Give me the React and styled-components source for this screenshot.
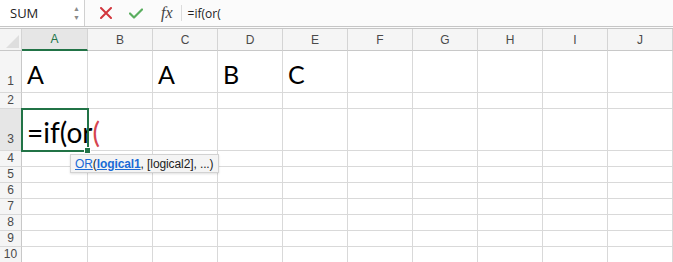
import React from 'react';
import styled, { createGlobalStyle } from 'styled-components';

const GlobalStyle = createGlobalStyle`
  html, body { margin: 0; padding: 0; background: #fff; }
  body { width: 673px; height: 262px; overflow: hidden; font-family: "Open Sans", "Liberation Sans", sans-serif; }
`;

const Page = styled.div`
  width: 673px;
  height: 262px;
  display: flex;
  flex-direction: column;
`;

const FormulaBar = styled.div`
  display: flex;
  align-items: center;
  height: 26px;
  background: #fbfbfb;
  border-bottom: 3px double #c6c6c6;
  box-sizing: content-box;
`;

const NameBox = styled.div`
  width: 85px;
  height: 26px;
  box-sizing: border-box;
  display: flex;
  align-items: center;
  justify-content: space-between;
  padding: 0 4px 0 10px;
  background: #fff;
  border-right: 1px solid #d0d0d0;
  font-size: 13px;
  color: #222;
`;

const Stepper = styled.div`
  display: flex;
  flex-direction: column;
  gap: 4px;
  color: #8a8a8a;
  font-size: 7px;
  line-height: 5px;
`;

const IconButton = styled.div`
  width: 30px;
  display: flex;
  justify-content: center;
  align-items: center;
`;

const Fx = styled.div`
  font-family: "Liberation Serif", serif;
  font-style: italic;
  font-size: 16px;
  color: #444;
  padding: 0 8px 0 8px;
  border-right: 1px solid #dcdcdc;
  line-height: 16px;
  margin-left: 2px;
`;

const FormulaText = styled.div`
  font-size: 12px;
  color: #222;
  padding-left: 6px;
`;

const Sheet = styled.div`
  position: relative;
  display: grid;
  grid-template-columns: 22px 66px repeat(9, 65px);
  grid-template-rows: 22px 42px 16px 42px repeat(7, 16px);
  flex: 1;
`;

const Corner = styled.div`
  background: #f4f4f4;
  border-right: 1px solid #d4d4d4;
  border-bottom: 1px solid #c8c8c8;
  position: relative;
  &::after {
    content: '';
    position: absolute;
    right: 2px;
    bottom: 2px;
    border-style: solid;
    border-width: 0 0 13px 13px;
    border-color: transparent transparent #dedede transparent;
  }
`;

const ColHeader = styled.div`
  box-sizing: border-box;
  display: flex;
  align-items: center;
  justify-content: center;
  font-size: 12px;
  font-family: "Liberation Sans", sans-serif;
  background: ${p => (p.$active ? '#e6e6e6' : '#f5f5f5')};
  color: ${p => (p.$active ? '#217346' : '#4a4a4a')};
  border-right: 1px solid #d4d4d4;
  border-bottom: ${p => (p.$active ? '2px solid #217346' : '1px solid #c8c8c8')};
`;

const RowHeader = styled.div`
  box-sizing: border-box;
  display: flex;
  align-items: flex-end;
  justify-content: center;
  padding-bottom: 1px;
  font-size: 12px;
  font-family: "Liberation Sans", sans-serif;
  background: ${p => (p.$active ? '#e6e6e6' : '#f5f5f5')};
  color: #4a4a4a;
  border-right: 1px solid #c8c8c8;
  border-bottom: 1px solid #d9d9d9;
  ${p => p.$tall && 'padding-bottom: 4px;'}
`;

const Cell = styled.div`
  box-sizing: border-box;
  display: flex;
  align-items: flex-end;
  padding: 0 0 5px 5px;
  border-right: 1px solid #d9d9d9;
  border-bottom: 1px solid #d9d9d9;
  font-family: "Lato", "Open Sans", sans-serif;
  font-size: 25px;
  line-height: 25px;
  color: #000;
  white-space: nowrap;
  position: relative;
  overflow: visible;
  ${p => p.$selected && `
    outline: 2px solid #217346;
    outline-offset: -1px;
    z-index: 2;
    font-size: 28px;
    line-height: 28px;
    padding-bottom: 4px;
    &::after {
      content: '';
      position: absolute;
      right: -4px;
      bottom: -4px;
      width: 5px;
      height: 5px;
      background: #217346;
      border: 1px solid #fff;
    }
  `}
`;

const Paren = styled.span`
  color: #d5444f;
`;

const Tooltip = styled.div`
  position: absolute;
  left: 70px;
  top: 125px;
  z-index: 3;
  height: 17px;
  padding: 0 4px;
  display: flex;
  align-items: center;
  background: #f4f4f4;
  border: 1px solid #d2d2d2;
  box-shadow: 0 1px 2px rgba(0, 0, 0, 0.12);
  font-family: "Liberation Sans", sans-serif;
  font-size: 12px;
  letter-spacing: -0.1px;
  color: #222;
  white-space: nowrap;
`;

const Link = styled.span`
  color: #1a6ad6;
  text-decoration: underline;
  font-weight: ${p => (p.$bold ? 700 : 400)};
`;

const cols = ['A', 'B', 'C', 'D', 'E', 'F', 'G', 'H', 'I', 'J'];
const data = { '1A': 'A', '1C': 'A', '1D': 'B', '1E': 'C' };

export default function App() {
  const rows = [1, 2, 3, 4, 5, 6, 7, 8, 9, 10];
  return (
    <Page>
      <GlobalStyle />
      <FormulaBar>
        <NameBox>
          SUM
          <Stepper>
            <span>▲</span>
            <span>▼</span>
          </Stepper>
        </NameBox>
        <IconButton style={{ marginLeft: 6 }}>
          <svg width="12" height="12" viewBox="0 0 12 12">
            <path d="M1 1 L11 11 M11 1 L1 11" stroke="#d2363d" strokeWidth="2" strokeLinecap="round" />
          </svg>
        </IconButton>
        <IconButton>
          <svg width="14" height="11" viewBox="0 0 14 11">
            <path d="M1 5.5 L5 9.5 L13 1.5" stroke="#5aae5f" strokeWidth="2.2" fill="none" strokeLinecap="round" strokeLinejoin="round" />
          </svg>
        </IconButton>
        <Fx>fx</Fx>
        <FormulaText>=if(or(</FormulaText>
      </FormulaBar>
      <Sheet>
        <Corner />
        {cols.map(c => (
          <ColHeader key={c} $active={c === 'A'}>{c}</ColHeader>
        ))}
        {rows.map(r => (
          <React.Fragment key={r}>
            <RowHeader $active={r === 3} $tall={r === 1 || r === 3}>{r}</RowHeader>
            {cols.map(c =>
              r === 3 && c === 'A' ? (
                <Cell key={c} $selected>
                  =if(or<Paren>(</Paren>
                </Cell>
              ) : (
                <Cell key={c}>{data[`${r}${c}`] || ''}</Cell>
              )
            )}
          </React.Fragment>
        ))}
        <Tooltip>
          <Link>OR</Link>(<Link $bold>logical1</Link>, [logical2], ...)
        </Tooltip>
      </Sheet>
    </Page>
  );
}
